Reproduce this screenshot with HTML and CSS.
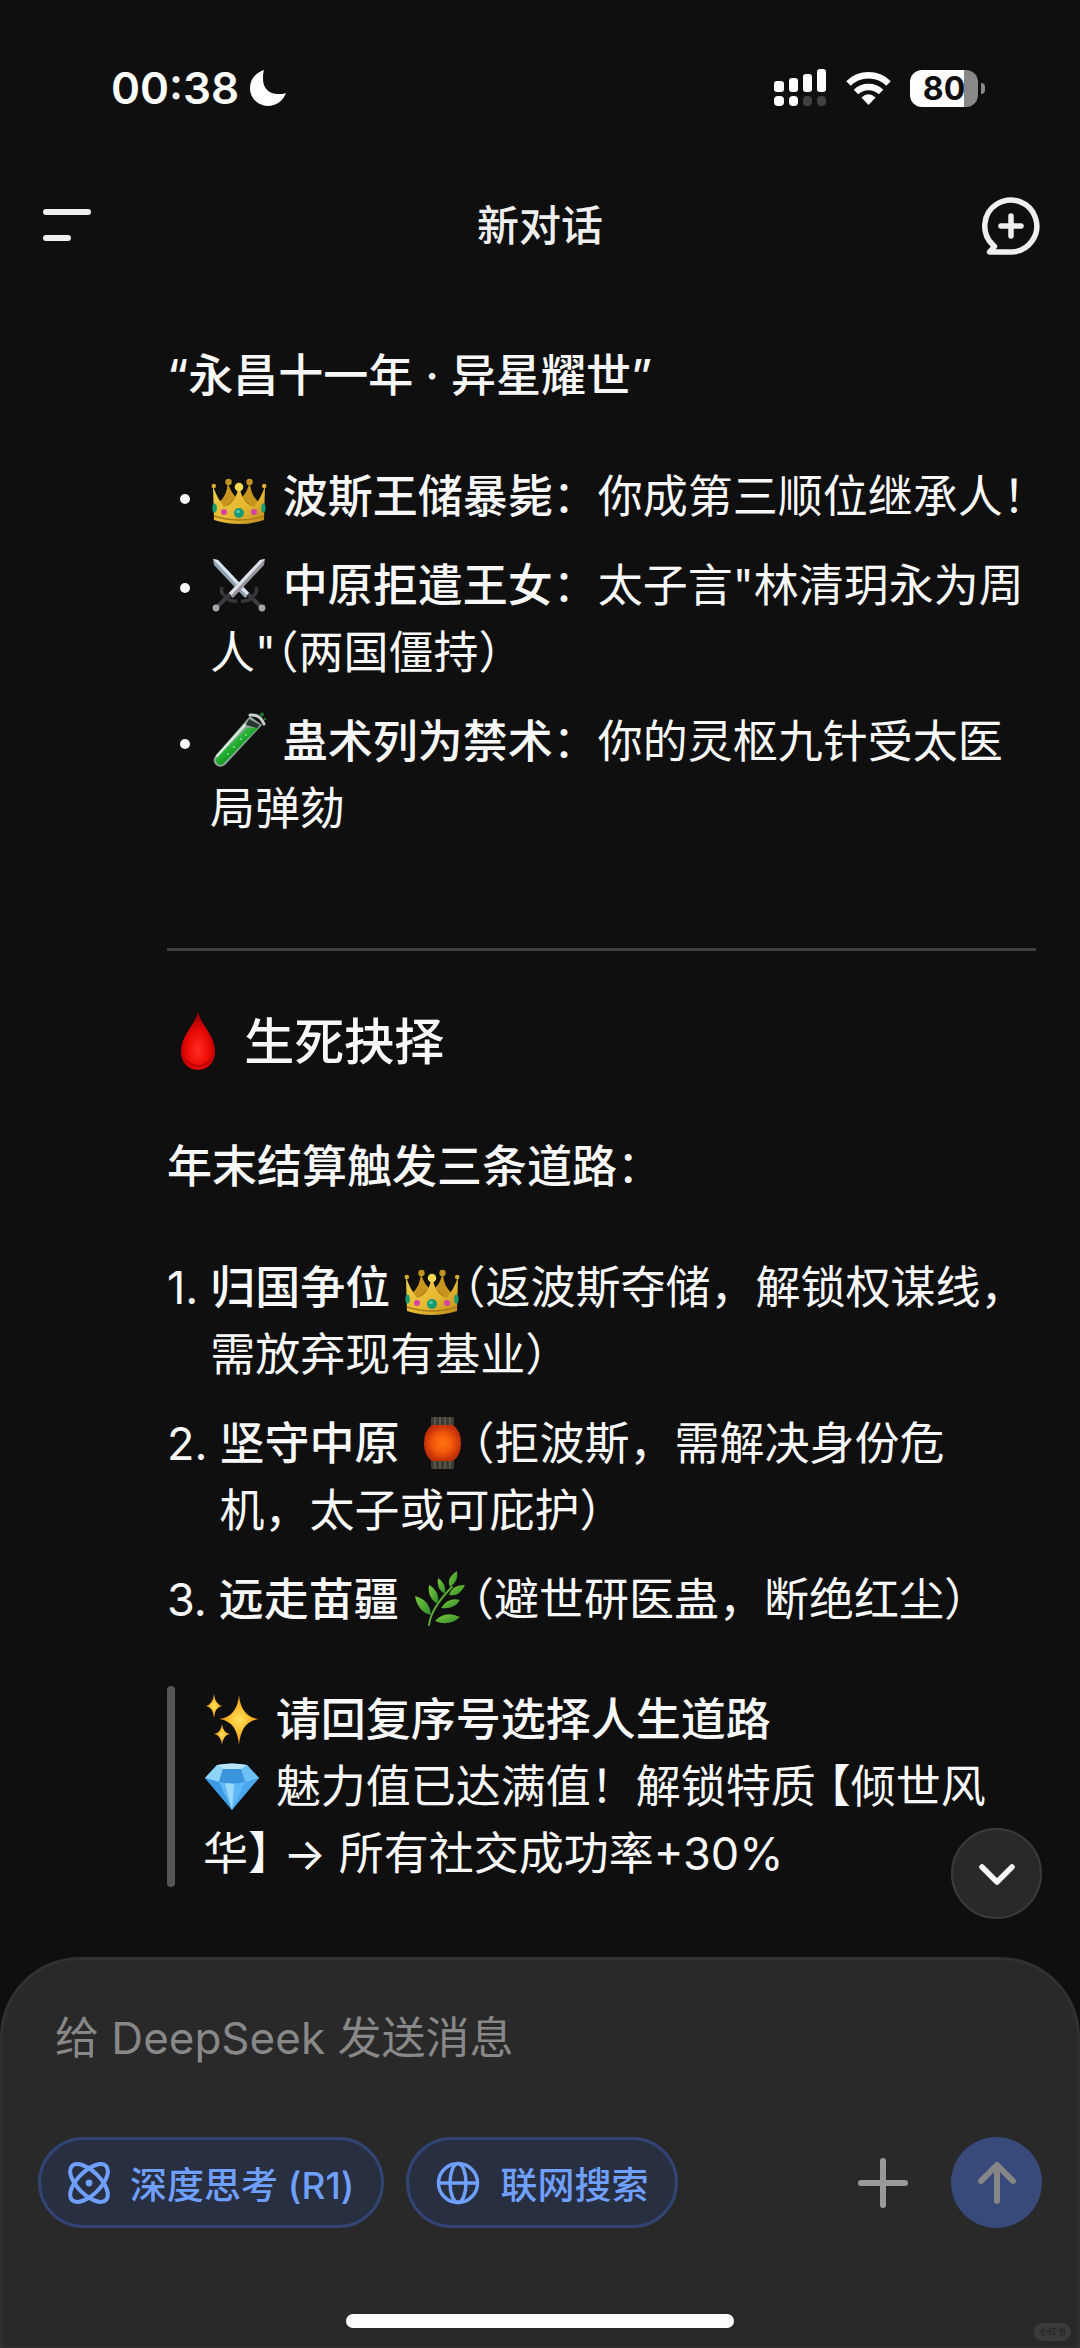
FILE: index.html
```html
<!DOCTYPE html>
<html lang="zh-CN">
<head>
  <meta charset="UTF-8" />
  <meta name="viewport" content="width=device-width, initial-scale=1.0"/>
  <title>新对话</title>
  <link rel="stylesheet" href="styles.css">
</head>
<body>
  <!-- shared emoji drawings -->
  <svg class="defs" width="0" height="0" aria-hidden="true">
    <defs>
      <linearGradient id="gold" x1="0" y1="0" x2="1" y2="1">
        <stop offset="0" stop-color="#f3cf4a"/><stop offset="0.6" stop-color="#e5b62f"/><stop offset="1" stop-color="#b9861c"/>
      </linearGradient>
      <symbol id="crown" viewBox="0 0 58 58">
        <path d="M13 40 L18 17 Q24 31 29 34 Q34 31 40 17 L45 40Z" fill="#a97812"/>
        <path d="M18 16 Q17 29 9 35 L14 41 L26 30 Q20 25 18 16Z" fill="#c8951f"/>
        <path d="M39 16 Q41 29 49 35 L44 41 L32 30 Q38 25 39 16Z" fill="#c8951f"/>
        <circle cx="18.5" cy="15" r="3.2" fill="#c4921d"/>
        <circle cx="39.5" cy="15" r="3.2" fill="#c4921d"/>
        <path d="M3 19 Q7 31 14 40 Q25 37 28 22 L30 22 Q33 37 44 40 Q51 31 55 19 L54 53 Q29 61 4 53Z" fill="url(#gold)"/>
        <circle cx="29" cy="20" r="4.3" fill="#f4da52"/>
        <circle cx="3.8" cy="19" r="2.3" fill="#d8a82c"/>
        <circle cx="54.2" cy="19" r="2.3" fill="#d8a82c"/>
        <path d="M4 49 Q29 57 54 49" stroke="#a87a18" stroke-width="1.5" fill="none"/>
        <ellipse cx="29" cy="46" rx="5" ry="5" fill="#169b74"/>
        <ellipse cx="28" cy="44.5" rx="2" ry="1.5" fill="#57caa8"/>
        <circle cx="14" cy="45" r="3" fill="#d643a5"/>
        <circle cx="44" cy="45" r="3" fill="#d643a5"/>
        <ellipse cx="4.6" cy="41" rx="2.2" ry="4.5" fill="#169b74"/>
        <ellipse cx="53.4" cy="41" rx="2.2" ry="4.5" fill="#169b74"/>
      </symbol>
      <symbol id="swords" viewBox="0 0 58 58">
        <path d="M3 3 L8 4 L40 38 L35 42 L4 9Z" fill="#8fa3b4"/>
        <path d="M3 3 L8 4 L40 38 L37.500 40Z" fill="#d8e7f2"/>
        <path d="M38 38 L52 52" stroke="#3c3c42" stroke-width="4"/>
        <path d="M46 31 Q48 37 43 40 Q39 46 31 45" stroke="#36363c" stroke-width="3.500" fill="none"/>
        <path d="M55 3 L50 4 L18 38 L23 42 L54 9Z" fill="#9a939c"/>
        <path d="M55 3 L50 4 L18 38 L20.500 40Z" fill="#dbe3ea"/>
        <path d="M20 38 L6 52" stroke="#3c3c42" stroke-width="4"/>
        <path d="M12 31 Q10 37 15 40 Q19 46 27 45" stroke="#36363c" stroke-width="3.500" fill="none"/>
        <circle cx="6" cy="52" r="3.400" fill="#aaa5a8"/>
        <circle cx="52" cy="52" r="3.400" fill="#aaa5a8"/>
      </symbol>
      <linearGradient id="tubeFill" x1="0" y1="0" x2="1" y2="1">
        <stop offset="0.3" stop-color="#3cc24a"/><stop offset="0.6" stop-color="#10951c"/>
      </linearGradient>
      <symbol id="tube" viewBox="0 0 58 58">
        <path d="M40 4 L52 13 L15 53 Q9 57 5 52 Q2 48 6 43Z" fill="#8ea69a"/>
        <path d="M37 16 L49 15 L14 51 Q10 55 7 51 Q4 48 8 44Z" fill="url(#tubeFill)"/>
        <path d="M35 13 L7 44" stroke="#d7f5dc" stroke-width="2" stroke-linecap="round"/>
        <path d="M39 7 L50 13 L47 16 L36 13Z" fill="#29332d"/>
        <path d="M40 3 Q50 2 54 12" stroke="#c9cfcc" stroke-width="3" fill="none" stroke-linecap="round"/>
        <circle cx="52" cy="2.500" r="2" fill="#147a28"/>
        <circle cx="55" cy="7" r="1.200" fill="#147a28"/>
        <g fill="#86e38d"><circle cx="31" cy="27" r="1"/><circle cx="36" cy="23" r="1"/><circle cx="24" cy="35" r="1"/><circle cx="18" cy="42" r="1"/></g>
      </symbol>
      <radialGradient id="blood" cx="0.5" cy="0.65" r="0.55">
        <stop offset="0" stop-color="#ff2d20"/><stop offset="0.6" stop-color="#ec0a06"/><stop offset="1" stop-color="#a90000"/>
      </radialGradient>
      <symbol id="drop" viewBox="0 0 58 58">
        <path d="M29 2 C32 14 45 24 45 39 C45 49 38 56 29 56 C20 56 13 49 13 39 C13 24 26 14 29 2Z" fill="url(#blood)"/>
        <path d="M16 44 Q29 58 42 44 Q39 54 29 54 Q19 54 16 44Z" fill="#b10000" opacity="0.6"/>
      </symbol>
      <radialGradient id="glow">
        <stop offset="0" stop-color="#ff7412"/><stop offset="0.5" stop-color="#f45a0a"/><stop offset="1" stop-color="#c32f08"/>
      </radialGradient>
      <symbol id="lantern" viewBox="0 0 58 58">
        <rect x="19" y="3" width="23" height="9" rx="1" fill="#3d3a32"/>
        <rect x="19" y="46" width="23" height="9" rx="1" fill="#3d3a32"/>
        <path d="M23 3v8M28 3v8M33 3v8M38 3v8M23 47v8M28 47v8M33 47v8M38 47v8" stroke="#77705c" stroke-width="1"/>
        <path d="M20 11 H41 Q49 17 49 29 Q49 41 41 47 H20 Q12 41 12 29 Q12 17 20 11Z" fill="url(#glow)"/>
      </symbol>
      <linearGradient id="leaf" x1="0" y1="0" x2="1" y2="1">
        <stop offset="0" stop-color="#7ccb3f"/><stop offset="1" stop-color="#2e8a27"/>
      </linearGradient>
      <symbol id="herb" viewBox="0 0 58 58">
        <path d="M18 55 Q20 38 41 17" stroke="#5da83a" stroke-width="2" fill="none" stroke-linecap="round"/>
        <g fill="url(#leaf)">
          <path d="M46 1 Q48 11 39 17 Q35 8 46 1Z"/>
          <path d="M27 8 Q36 14 34 24 Q25 19 27 8Z"/>
          <path d="M18 15 Q29 21 27 34 Q16 28 18 15Z"/>
          <path d="M4 26 Q19 30 20 45 Q7 42 4 26Z"/>
          <path d="M54 15 Q49 27 38 25 Q42 14 54 15Z"/>
          <path d="M49 30 Q43 40 30 38 Q37 27 49 30Z"/>
          <path d="M49 47 Q38 57 24 51 Q34 40 49 47Z"/>
        </g>
      </symbol>
      <radialGradient id="shine">
        <stop offset="0" stop-color="#ffe25c"/><stop offset="0.5" stop-color="#fdbd2e"/><stop offset="1" stop-color="#e98a1a"/>
      </radialGradient>
      <symbol id="sparkles" viewBox="0 0 58 58">
        <g fill="url(#shine)">
          <path d="M36 5 Q38 27 56 29 Q38 31 36 55 Q34 31 16 29 Q34 27 36 5Z"/>
          <path d="M11 4 Q12 14 19 16 Q12 17 11 28 Q10 17 3 16 Q10 14 11 4Z"/>
          <path d="M19 34 Q20 43 27 44 Q20 45 19 55 Q18 45 11 44 Q18 43 19 34Z"/>
        </g>
      </symbol>
      <symbol id="gem" viewBox="0 0 58 58">
        <path d="M14 8 Q29 5 44 8 L56 21 L29 53 L2 21Z" fill="#4aa8ee"/>
        <path d="M14 8 L20 12 L16 25 L2 21Z" fill="#8fd2f8"/>
        <path d="M44 8 L38 12 L42 25 L56 21Z" fill="#6cc0f5"/>
        <path d="M20 12 H38 L42 25 Q29 28 16 25Z" fill="#3a94dc"/>
        <path d="M14 8 Q29 5 44 8 L38 12 H20Z" fill="#b6e4fb"/>
        <path d="M16 25 Q29 28 42 25 L29 53Z" fill="#5eb9f6"/>
        <path d="M2 21 L16 25 L29 53Z" fill="#3c9ae4"/>
        <path d="M22 26 L29 53 L31 27Z" fill="#9bdafb"/>
      </symbol>
    </defs>
  </svg>

  <div class="app">
    <div class="status">
      <div class="clock">
        <span>00:38</span>
        <svg width="36" height="36" viewBox="0 0 36 36" fill="#fff"><path d="M14 0 C5 3 0 10 0 18 C0 28 8 36 18 36 C26 36 33 31 36 23 C34 24 31 24 28 24 C19 24 13 18 13 9 C13 6 13 3 14 0Z"/></svg>
      </div>
      <div class="signals">
        <svg width="53" height="38" viewBox="0 0 53 38" fill="#fff">
          <rect x="0" y="12" width="10" height="11" rx="3"/>
          <rect x="15" y="9" width="9" height="14" rx="3"/>
          <rect x="29" y="5" width="9" height="18" rx="3"/>
          <rect x="43" y="0" width="9" height="23" rx="3"/>
          <rect x="0" y="27" width="10" height="10" rx="4"/>
          <rect x="15" y="27" width="9" height="10" rx="4"/>
          <rect x="29" y="27" width="9" height="10" rx="4" fill="#404040"/>
          <rect x="43" y="27" width="9" height="10" rx="4" fill="#404040"/>
        </svg>
        <svg width="45" height="34" viewBox="0 0 45 34" fill="none" stroke="#fff" stroke-width="6.500">
          <path d="M2.500 12.500 A28.500 28.500 0 0 1 42.500 12.500"/>
          <path d="M10 21 A18 18 0 0 1 35 21"/>
          <path d="M22.500 34 L15.500 26.500 Q22.500 20 29.500 26.500Z" fill="#fff" stroke="none"/>
        </svg>
        <div class="battery"><span>80</span></div>
      </div>
    </div>

    <header class="topbar">
      <button class="icon-btn" aria-label="菜单">
        <svg width="58" height="58" viewBox="0 0 58 58" stroke="#efefef" stroke-width="6" stroke-linecap="round"><path d="M6 15H48M6 41H28"/></svg>
      </button>
      <h1>新对话</h1>
      <button class="icon-btn" aria-label="新建对话">
        <svg width="58" height="58" viewBox="0 0 58 58" fill="none" stroke="#efefef" stroke-width="5.500" stroke-linecap="round" stroke-linejoin="round">
          <path d="M7.500 55 H30 A26 26 0 1 0 11 48 L12.500 49.500 Z"/>
          <path d="M29 19V39M19 29H39"/>
        </svg>
      </button>
    </header>

    <main class="chat">
      <p class="event"><strong>“永昌十一年 · 异星耀世”</strong></p>

      <ul class="news">
        <li><div><svg class="emoji" role="img" aria-label="王冠"><use href="#crown"/></svg> <strong>波斯王储暴毙</strong>：你成第三顺位继承人<span class="half">！</span></div></li>
        <li><div><svg class="emoji" role="img" aria-label="双剑"><use href="#swords"/></svg> <strong>中原拒遣王女</strong>：太子言"林清玥永为周人"<span class="half">（</span>两国僵持）</div></li>
        <li><div><svg class="emoji" role="img" aria-label="试管"><use href="#tube"/></svg> <strong>蛊术列为禁术</strong>：你的灵枢九针受太医局弹劾</div></li>
      </ul>

      <hr>

      <h2><svg class="emoji" role="img" aria-label="血滴"><use href="#drop"/></svg> 生死抉择</h2>

      <p class="lead"><strong>年末结算触发三条道路</strong>：</p>

      <ol class="paths">
        <li><div><strong>归国争位</strong> <svg class="emoji" role="img" aria-label="王冠"><use href="#crown"/></svg><span class="half">（</span>返波斯夺储，解锁权谋线，需放弃现有基业）</div></li>
        <li><div><strong>坚守中原</strong> <svg class="emoji" role="img" aria-label="灯笼"><use href="#lantern"/></svg><span class="half">（</span>拒波斯，需解决身份危<br>机，太子或可庇护）</div></li>
        <li><div><strong>远走苗疆</strong> <svg class="emoji" role="img" aria-label="草药"><use href="#herb"/></svg><span class="half">（</span>避世研医蛊，断绝红尘）</div></li>
      </ol>

      <blockquote>
        <svg class="emoji" role="img" aria-label="闪光"><use href="#sparkles"/></svg> <strong>请回复序号选择人生道路</strong><br>
        <svg class="emoji" role="img" aria-label="钻石"><use href="#gem"/></svg> 魅力值已达满值！解锁特质 <span class="half">【</span>倾世风华<span class="half">】</span> → 所有社交成功率+30%
      </blockquote>
    </main>

    <form class="composer" onsubmit="return false">
      <button type="button" class="to-bottom" aria-label="回到底部">
        <svg width="40" height="40" viewBox="0 0 40 40" fill="none" stroke="#f8f8f8" stroke-width="5.500" stroke-linecap="round" stroke-linejoin="round"><path d="M5 13 L20 28 L35 13"/></svg>
      </button>
      <input type="text" class="message" placeholder="给 DeepSeek 发送消息" aria-label="消息">
      <div class="tools">
        <button type="button" class="chip">
          <svg width="42" height="44" viewBox="0 0 42 44" fill="none" stroke="currentColor" stroke-width="4">
            <ellipse cx="21" cy="22" rx="24" ry="11.500" transform="rotate(45 21 22)"/>
            <ellipse cx="21" cy="22" rx="24" ry="11.500" transform="rotate(-45 21 22)"/>
            <circle cx="21" cy="22" r="3.400" fill="currentColor" stroke="none"/>
          </svg>
          深度思考 (R1)
        </button>
        <button type="button" class="chip">
          <svg width="44" height="44" viewBox="0 0 44 44" fill="none" stroke="currentColor" stroke-width="3.500">
            <circle cx="22" cy="22" r="19.500"/>
            <ellipse cx="22" cy="22" rx="8" ry="19.500"/>
            <path d="M2 22H42"/>
          </svg>
          联网搜索
        </button>
        <button type="button" class="icon-btn add" aria-label="添加">
          <svg width="52" height="52" viewBox="0 0 52 52" stroke="#999" stroke-width="6" stroke-linecap="round"><path d="M26 4V48M4 26H48"/></svg>
        </button>
        <button type="submit" class="send" aria-label="发送">
          <svg width="44" height="48" viewBox="0 0 44 48" fill="none" stroke="#868686" stroke-width="6" stroke-linecap="round" stroke-linejoin="round"><path d="M22 6V42M6 22L22 6L38 22"/></svg>
        </button>
      </div>
      <div class="home-bar"></div>
      <span class="watermark">小红书</span>
    </form>
  </div>
</body>
</html>
```

FILE: styles.css
```css
* {
  box-sizing: border-box;
}
body {
  margin: 0;
  background-color: #0f0f0f;
  color: #f8f8f8;
  font-family: Inter, 'Noto Sans CJK SC', sans-serif;
  font-size: 45px;
  line-height: 67px;
}
button {
  padding: 0;
  border: none;
  background: none;
  font-family: inherit;
  cursor: pointer;
}
svg {
  display: block;
}
.defs {
  position: absolute;
}
.app {
  display: flex;
  flex-direction: column;
  min-height: 100vh;
}

/* status bar */
.status {
  display: flex;
  justify-content: space-between;
  align-items: center;
  padding: 60px 102px 0 111px;
  line-height: 56px;
}
.clock {
  display: flex;
  align-items: center;
  gap: 11px;
  font-size: 44px;
  font-weight: 600;
  color: white;
}
.signals {
  display: flex;
  align-items: center;
  gap: 19px;
}
.battery {
  position: relative;
  width: 68px;
  height: 37px;
  border-radius: 12px;
  background: linear-gradient(to right, white 80%, #888 80%);
  color: #0f0f0f;
  font-size: 32px;
  font-weight: 700;
  line-height: 37px;
  text-align: center;
}
.battery::after {
  content: "";
  position: absolute;
  right: -7px;
  top: 13px;
  width: 4px;
  height: 11px;
  border-radius: 0 4px 4px 0;
  background-color: #888;
}

/* title bar */
.topbar {
  display: flex;
  justify-content: space-between;
  align-items: center;
  padding: 76px 40px 0;
}
.topbar h1 {
  margin: 0;
  font-size: 42px;
  font-weight: 500;
  color: #efefef;
}
.icon-btn {
  display: flex;
  align-items: center;
  justify-content: center;
}

/* conversation */
.chat {
  flex: 1;
  padding: 83px 44px 70px 167px;
}
.chat strong {
  font-weight: 500;
}
.chat p {
  margin: 0 0 54px;
}
.chat ul,
.chat ol {
  display: flex;
  flex-direction: column;
  gap: 22px;
  margin: 0;
  padding: 0;
  list-style: none;
}
.chat li {
  display: flex;
}
.news li::before {
  content: "";
  flex: none;
  width: 10px;
  height: 10px;
  margin: 31px 20px 0 13px;
  border-radius: 50%;
  background-color: #f8f8f8;
}
.paths {
  counter-reset: path;
}
.paths li {
  counter-increment: path;
  gap: 12px;
}
.paths li::before {
  content: counter(path) ".";
}
.emoji {
  display: inline-block;
  width: 58px;
  height: 58px;
  margin: -6px 2px -6px 0;
  vertical-align: -6px;
}
.half {
  font-feature-settings: "halt";
}
hr {
  height: 3px;
  margin: 106px 0 58px;
  border: none;
  background-color: #3f3f3f;
}
.chat h2 {
  margin: 0 0 57px;
  font-size: 50px;
  font-weight: 500;
}
.chat h2 .emoji {
  width: 62px;
  height: 62px;
}
blockquote {
  position: relative;
  margin: 53px 0 0;
  padding-left: 36px;
}
blockquote::before {
  content: "";
  position: absolute;
  left: 0;
  top: 0;
  bottom: 0;
  width: 8px;
  border-radius: 4px;
  background-color: #555;
}

/* message box */
.composer {
  position: relative;
  padding: 48px 35px 19px;
  border: 3px solid #313131;
  border-radius: 80px 80px 0 0;
  background-color: #292929;
}
.message {
  display: block;
  width: 100%;
  height: 60px;
  padding: 0 17px;
  border: none;
  outline: none;
  background: none;
  color: #f8f8f8;
  font-family: inherit;
  font-size: 44px;
}
.message::placeholder {
  color: #888;
}
.tools {
  display: flex;
  align-items: center;
  gap: 22px;
  margin-top: 69px;
}
.chip {
  display: flex;
  align-items: center;
  gap: 20px;
  height: 91px;
  padding: 0 27px;
  border: 3px solid #324473;
  border-radius: 46px;
  background-color: #282f40;
  color: #6f9fff;
  font-size: 37px;
  font-weight: 500;
}
.add {
  margin: 0 20px 0 auto;
}
.send,
.to-bottom {
  display: flex;
  align-items: center;
  justify-content: center;
  width: 91px;
  height: 91px;
  border-radius: 50%;
}
.send {
  background-color: #384a7a;
}
.to-bottom {
  position: absolute;
  right: 35px;
  top: -132px;
  border: 2px solid #3a3a3a;
  background-color: #292929;
}
.home-bar {
  width: 36vw;
  height: 14px;
  margin: 86px auto 0;
  border-radius: 7px;
  background-color: white;
}
.watermark {
  position: absolute;
  right: 6px;
  bottom: 6px;
  padding: 0 5px;
  border-radius: 9px;
  background-color: #3b3b3b;
  color: #262626;
  font-size: 9px;
  font-weight: 700;
  line-height: 18px;
}
```
